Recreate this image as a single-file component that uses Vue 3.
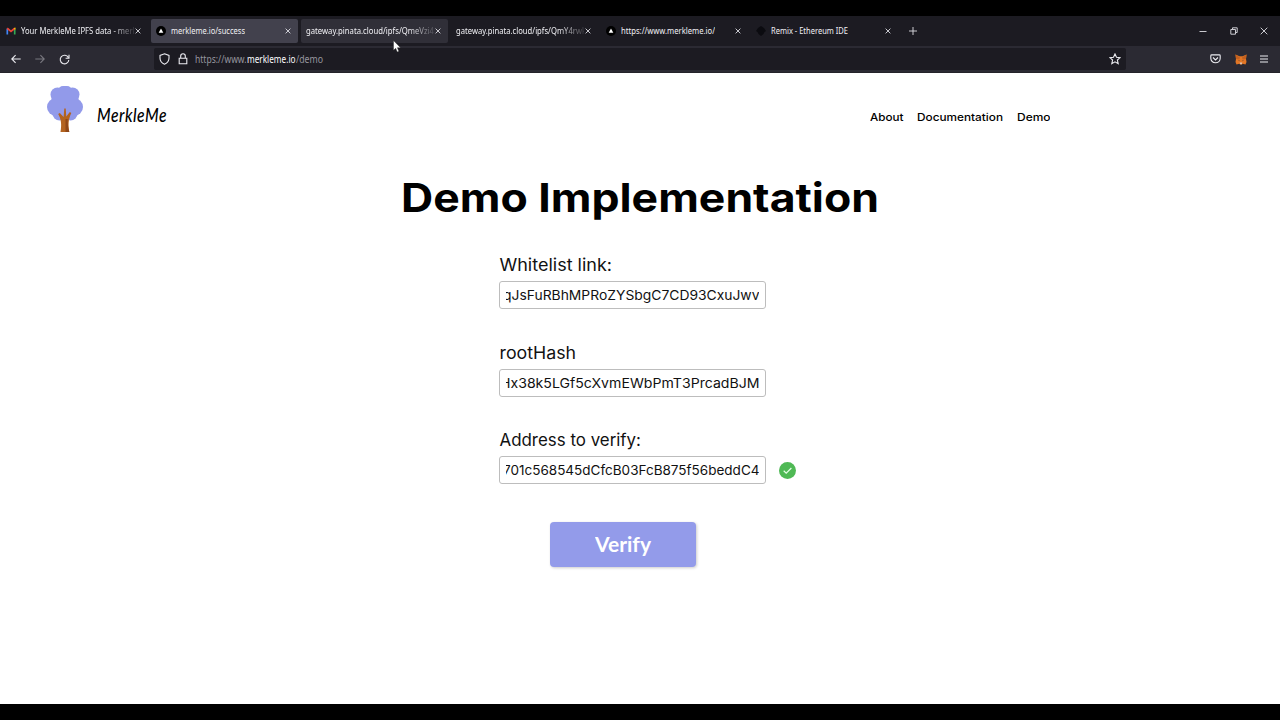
<script setup>
const tabs = [
  { title: 'Your MerkleMe IPFS data - merkle', icon: 'gmail', w: 122, fade: true },
  { title: 'merkleme.io/success', icon: 'site', w: 74, state: 'active' },
  { title: 'gateway.pinata.cloud/ipfs/QmeVzi4', w: 128, fade: true, state: 'hover' },
  { title: 'gateway.pinata.cloud/ipfs/QmY4rwk', w: 130, fade: true },
  { title: 'https://www.merkleme.io/', icon: 'site', w: 94 },
  { title: 'Remix - Ethereum IDE', icon: 'remix', w: 77 },
]
const fields = [
  { label: 'Whitelist link:', lw: 112.5, value: 'qJsFuRBhMPRoZYSbgC7CD93CxuJwv', vw: 256.5 },
  { label: 'rootHash', lw: 76.5, value: 'Hx38k5LGf5cXvmEWbPmT3PrcadBJM', vw: 259.5 },
  { label: 'Address to verify:', lw: 141.5, value: '701c568545dCfcB03FcB875f56beddC4', vw: 256.5, ok: true },
]
const links = [
  { text: 'About', w: 33.5 },
  { text: 'Documentation', w: 86 },
  { text: 'Demo', w: 33.5 },
]
</script>

<template>
  <div class="screen">
    <header class="tabbar">
      <div v-for="t in tabs" :key="t.title" class="tab" :class="t.state">
        <svg v-if="t.icon === 'gmail'" class="fav" viewBox="0 0 10 10">
          <path d="M1.3 8.5V2.6" stroke="#4285f4" stroke-width="1.7" />
          <path d="M8.7 8.5V2.6" stroke="#34a853" stroke-width="1.7" />
          <path d="M1.2 2.3 5 5.4 8.8 2.3" fill="none" stroke="#ea4335" stroke-width="1.8" />
          <path d="M8 3.2V2l1.5-.4v2z" fill="#fbbc04" />
        </svg>
        <svg v-else-if="t.icon === 'site'" class="fav" viewBox="0 0 10 10">
          <circle cx="5" cy="5" r="5" fill="#000" />
          <path d="M5 2.6 7.3 6.7H2.7z" fill="#fff" />
        </svg>
        <svg v-else-if="t.icon === 'remix'" class="fav" viewBox="0 0 10 10">
          <path d="M5 0 8 2 10 5 8.5 6 7.5 8 5 10 2.5 8 1.5 6 0 5 2 2z" fill="#0b0b10" />
        </svg>
        <div class="tab-title" :class="{ fade: t.fade }">
          <svg height="14" :width="t.w"><text x="0" y="10" :textLength="t.w" lengthAdjust="spacingAndGlyphs">{{ t.title }}</text></svg>
        </div>
        <svg class="close" viewBox="0 0 6 6"><path d="M.6.6 5.4 5.4M5.4.6.6 5.4" /></svg>
      </div>
      <svg class="plus" viewBox="0 0 8 8"><path d="M4 0V8M0 4H8" /></svg>
      <div class="window-controls">
        <svg width="8" height="8" viewBox="0 0 8 8"><path d="M.5 4.5H7.5" /></svg>
        <svg width="8" height="8" viewBox="0 0 8 8"><path d="M.8 2.5H5.5V7.2H.8zM2.5 2.2V.8H7.2V5.5H5.8" /></svg>
        <svg width="8" height="8" viewBox="0 0 8 8"><path d="M.7.7 7.3 7.3M7.3.7.7 7.3" /></svg>
      </div>
    </header>

    <div class="toolbar">
      <div class="nav-buttons">
        <svg width="10" height="10" viewBox="0 0 10 10"><path d="M9.7 5H.8M4.6 1.2.8 5l3.8 3.8" /></svg>
        <svg class="dim" width="10" height="10" viewBox="0 0 10 10"><path d="M.3 5h8.9M5.4 1.2 9.2 5 5.4 8.8" /></svg>
        <svg width="11" height="11" viewBox="0 0 11 11"><path d="M9.3 3.5A4.3 4.3 0 1 0 9.8 6M10 .8v3.4H6.6" /></svg>
      </div>
      <div class="urlbar">
        <svg width="11" height="12" viewBox="0 0 11 12"><path d="M5.5.8 10 2.5V5c0 3-1.5 5-4.5 6.2C2.5 10 1 8 1 5V2.5z" /></svg>
        <svg class="lock" width="10" height="12" viewBox="0 0 10 12"><path d="M1.2 5.3H8.8V10.8H1.2zM2.7 5.3V3.1a2.3 2.3 0 0 1 4.6 0V5.3" /></svg>
        <div class="url">
          <svg width="52" height="16"><text x="0" y="12" textLength="51.5" lengthAdjust="spacingAndGlyphs">https://www.</text></svg>
          <svg class="host" width="49" height="16"><text x="0" y="12" textLength="48.5" lengthAdjust="spacingAndGlyphs">merkleme.io</text></svg>
          <svg width="28" height="16"><text x="0" y="12" textLength="27" lengthAdjust="spacingAndGlyphs">/demo</text></svg>
        </div>
        <svg class="star" width="12" height="12" viewBox="0 0 12 12"><path d="M6 .9 7.5 4.2 11.1 4.6 8.4 7 9.2 10.7 6 8.8 2.8 10.7 3.6 7 .9 4.6 4.5 4.2z" /></svg>
      </div>
      <div class="tools">
        <svg width="11" height="10" viewBox="0 0 11 10"><path d="M1.7.9H9.3Q10.2.9 10.2 1.8V4.3A4.7 4.5 0 0 1 .8 4.3V1.8Q.8.9 1.7.9zM3 3.5 5.5 5.9 8 3.5" /></svg>
        <svg class="fox" width="12" height="11" viewBox="0 0 12 11">
          <path d="M.5.4 4.5 2.3H7.5L11.5.4 11 5 11.5 8 10.5 10.5 7.7 9.8 6.8 10.5H5.2L4.3 9.8 1.5 10.5.5 8 1 5z" />
          <path d="M.5.4 5 3.4 4.3 5.5 1 5zM11.5.4 7 3.4 7.7 5.5 11 5z" />
          <path d="M4.7 8.6H7.3L6.8 10.2H5.2z" />
          <path d="M3.2 6.2 4.6 6.6 4.3 7.3zM8.8 6.2 7.4 6.6 7.7 7.3z" />
        </svg>
        <svg width="8" height="8" viewBox="0 0 8 8"><path d="M0 1H8M0 4H8M0 7H8" /></svg>
      </div>
    </div>

    <main class="page">
      <div class="site-head">
        <svg class="tree" viewBox="0 0 36 47">
          <g fill="#929aea">
            <circle cx="10.5" cy="8.5" r="7" /><circle cx="25.5" cy="8.5" r="7" />
            <circle cx="9" cy="21" r="9" /><circle cx="27" cy="21" r="9" />
            <rect x="11" y="0" width="14" height="34" rx="5" />
            <circle cx="12.5" cy="27.5" r="7" /><circle cx="23.5" cy="27.5" r="7" />
            <rect x="4.500" y="8" width="27" height="18" />
          </g>
          <path d="M13.5 46C14.7 39 14.5 34 11.2 28L12.8 27 16.6 31 17.3 22.5H18.7L19.3 30.5 22.8 26 24.3 27C21 34 21.3 39 22.3 46z" fill="#b3631f" />
          <path d="M18.5 33H20.7C20.5 37 21 42 22.3 46H18.5z" fill="#8f4717" />
        </svg>
        <svg class="brand" width="72" height="32" viewBox="0 0 72 32">
          <text x="0" y="22" textLength="70" lengthAdjust="spacingAndGlyphs">MerkleMe</text>
        </svg>
        <nav>
          <svg v-for="l in links" :key="l.text" :width="l.w" height="18"><text x="0" y="13.5" :textLength="l.w" lengthAdjust="spacingAndGlyphs">{{ l.text }}</text></svg>
        </nav>
      </div>

      <h1><svg width="480" height="56"><text x="1" y="40" textLength="478" lengthAdjust="spacingAndGlyphs">Demo Implementation</text></svg></h1>

      <form>
        <div v-for="f in fields" :key="f.label" class="field">
          <svg class="label" width="267" height="24"><text x="0.5" y="18" :textLength="f.lw" lengthAdjust="spacingAndGlyphs">{{ f.label }}</text></svg>
          <div class="row">
            <div class="input">
              <svg width="253" height="24"><text :x="253.5 - f.vw" y="17" :textLength="f.vw" lengthAdjust="spacingAndGlyphs">{{ f.value }}</text></svg>
            </div>
            <svg v-if="f.ok" class="ok" width="17" height="17" viewBox="0 0 17 17">
              <circle cx="8.5" cy="8.5" r="8.5" fill="#4fb955" />
              <path d="M4.7 8.8 7.2 11.2 12.4 6" fill="none" stroke="#e5ffe7" stroke-width="1.2" />
            </svg>
          </div>
        </div>
        <button type="button"><svg width="57" height="30"><text x="0" y="23" textLength="56" lengthAdjust="spacingAndGlyphs">Verify</text></svg></button>
      </form>
    </main>

    <svg class="cursor" viewBox="0 0 8 13"><path d="M.5.5V10.3L2.7 8.3 4.2 12 5.9 11.3 4.4 7.7H7.5z" fill="#fff" stroke="#222" stroke-width=".4" /></svg>
  </div>
</template>

<style>
body { background: #000; }
</style>

<style scoped>
.screen {
  position: relative;
  box-sizing: border-box;
  width: 1280px;
  height: 720px;
  padding: 16px 0;
  background: #000;
  overflow: hidden;
  display: flex;
  flex-direction: column;
}
svg { display: block; flex: none; }
.tabbar {
  height: 30px;
  box-sizing: border-box;
  flex: none;
  background: #1c1b22;
  display: flex;
  align-items: flex-start;
  padding: 3px 0 0 1.4px;
  gap: 3.5px;
}
.tab {
  box-sizing: border-box;
  width: 146.5px;
  height: 24px;
  border-radius: 2px;
  padding: 0 7px 0 5px;
  display: flex;
  align-items: center;
}
.tab.active { background: #42414d; }
.tab.hover { background: #302f38; }
.fav { width: 10px; height: 10px; margin-right: 5px; }
.tab-title { flex: 1; min-width: 0; overflow: hidden; }
.tab-title.fade { mask-image: linear-gradient(to right, #000 80%, transparent 103%); }
.tab-title text { font: 9px "Noto Sans", sans-serif; fill: #f0f0f4; }
.close { width: 6px; height: 6px; margin-left: 1px; }
.close path, .plus path, .window-controls path { fill: none; stroke: #dedee3; stroke-width: .9; }
.plus { width: 8px; height: 8px; margin: 8px 0 0 7.6px; }
.window-controls { display: flex; gap: 22.5px; margin: 8px 12px 0 auto; }
.toolbar {
  height: 27px;
  flex: none;
  background: #2b2a33;
  border-bottom: 1px solid #24232a;
  box-sizing: border-box;
  display: flex;
  align-items: center;
}
.toolbar path { fill: none; stroke: #ececf1; stroke-width: 1.1; }
.nav-buttons { width: 154px; box-sizing: border-box; padding-left: 11px; display: flex; align-items: center; gap: 14px; }
.nav-buttons .dim { opacity: .4; }
.urlbar {
  width: 972px;
  height: 22px;
  box-sizing: border-box;
  border-radius: 2px;
  background: #1c1b22;
  display: flex;
  align-items: center;
  padding: 0 5px;
}
.lock { margin-left: 8px; }
.url { display: flex; margin-left: 7px; }
.url text { font: 10px "Noto Sans", sans-serif; fill: #96969e; }
.url .host text { fill: #fbfbfe; }
.star { margin-left: auto; }
.tools { display: flex; align-items: center; margin-left: auto; padding-right: 12px; gap: 13.5px; }
.toolbar .fox path { stroke: none; }
.toolbar .fox path:nth-child(1) { fill: #e27625; }
.toolbar .fox path:nth-child(2) { fill: #c3601f; }
.toolbar .fox path:nth-child(3) { fill: #d9c4b4; }
.toolbar .fox path:nth-child(4) { fill: #2f343b; }
.page { flex: 1; background: #fff; }
.site-head { display: flex; align-items: flex-start; padding: 13px 230px 0 47px; height: 89px; box-sizing: border-box; }
.tree { width: 36px; height: 47px; }
.brand { margin: 14px 0 0 14px; overflow: visible; }
.brand text { font: italic 500 19px Lato, cursive; letter-spacing: .6px; fill: #000; }
nav { display: flex; gap: 13.5px; margin: 21px 0 0 auto; }
nav text { font: 500 10.6px Inter, sans-serif; fill: #000; }
h1 { margin: 10px 0 0; display: flex; justify-content: center; }
h1 text { font: 700 39.5px Inter, sans-serif; fill: #000; }
form { padding: 25px 0 0 499px; }
.field { height: 87.5px; }
.label text { font: 400 17px Inter, sans-serif; fill: #111; }
.row { display: flex; align-items: center; gap: 13px; margin-top: 4px; }
.input {
  box-sizing: border-box;
  width: 267px;
  height: 28px;
  border: 1px solid #bdbdbd;
  border-radius: 3px;
  padding: 1px 6px;
}
.input svg { overflow: hidden; }
.input text { font: 400 13px Inter, sans-serif; fill: #111; }
button {
  display: flex;
  align-items: center;
  justify-content: center;
  width: 146px;
  height: 45px;
  margin: 6px 0 0 51.4px;
  padding: 0;
  border: 0;
  border-radius: 4px;
  background: #939bea;
  box-shadow: 1px 1px 3px #0003;
}
button text { font: 700 20.5px Lato, sans-serif; fill: #fff; }
.cursor { position: absolute; left: 393px; top: 40px; width: 8px; height: 13px; }
</style>
